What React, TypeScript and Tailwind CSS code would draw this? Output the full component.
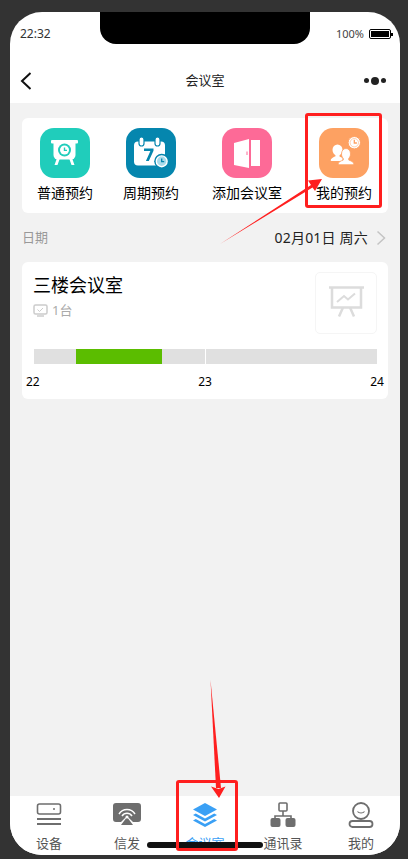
import React from 'react';

const FONT = "font-['Noto_Sans','Noto_Sans_CJK_SC',sans-serif]";

function BoardIcon() {
  return (
    <svg width="50" height="50" viewBox="0 0 50 50">
      <rect x="11" y="12" width="27" height="3.500" rx="1" fill="#fff" />
      <path d="M13.500 14h22v13a4.500 4.500 0 0 1-4.500 4.500H18a4.500 4.500 0 0 1-4.500-4.500z" fill="#fff" />
      <path d="M17 30l-2.500 7h3l2.500-7zM32 30l2.500 7h-3l-2.500-7z" fill="#fff" />
      <circle cx="24.500" cy="22" r="6.500" fill="#20cdbb" />
      <circle cx="24.500" cy="22" r="4.500" fill="#fff" />
      <path d="M24.500 19.500V22.400H27" stroke="#20cdbb" strokeWidth="1.400" fill="none" />
    </svg>
  );
}

function CalendarIcon() {
  return (
    <svg width="50" height="50" viewBox="0 0 50 50">
      <rect x="8" y="13.500" width="31" height="24" rx="4" fill="#fff" />
      <rect x="13" y="9" width="5" height="9" rx="2.500" fill="#fff" stroke="#0586ae" strokeWidth="1.200" />
      <rect x="29" y="9" width="5" height="9" rx="2.500" fill="#fff" stroke="#0586ae" strokeWidth="1.200" />
      <path d="M18 20.500h9.500v2.200L22.800 33h-2.900l4.500-10H18z" fill="#0586ae" />
      <circle cx="35.700" cy="33.300" r="7.500" fill="#0586ae" />
      <circle cx="35.700" cy="33.300" r="5.400" fill="#a9dbea" stroke="#fff" strokeWidth="1.400" />
      <path d="M35.700 30.500v3.100h2.500" stroke="#0586ae" strokeWidth="1.300" fill="none" />
    </svg>
  );
}

function DoorIcon() {
  return (
    <svg width="50" height="50" viewBox="0 0 50 50">
      <path d="M12 15l15-4v29l-15-3z" fill="#fff" />
      <path d="M29 12h9v26h-9z" fill="#fff" />
      <rect x="24.500" y="23.500" width="1" height="3.500" fill="#fd6a97" />
    </svg>
  );
}

function PeopleIcon() {
  return (
    <svg width="50" height="50" viewBox="0 0 50 50">
      <ellipse cx="18.500" cy="22" rx="5" ry="5.500" fill="#fff" />
      <path d="M16.500 25h4v3.500c1.500.8 2 1 3 1.500v3H12.500c-.6 0-.9-.3-.8-.9.2-1.700 2.500-3 4.800-3.900z" fill="#fff" />
      <path d="M20 36.700c-.6 0-.9-.4-.8-.9.3-1.900 2.700-2.900 5-3.700.2-.6.200-1.200 0-1.800-1-1.100-1.700-2.600-1.700-4.300 0-3.200 1.900-5.500 4.500-5.500s4.500 2.300 4.500 5.500c0 1.700-.7 3.200-1.700 4.300-.2.600-.2 1.200 0 1.800 2.300.8 4.700 1.800 5 3.700.1.500-.2.900-.8.900z" fill="#fff" stroke="#fda162" strokeWidth="0.800" />
      <circle cx="35.300" cy="14.700" r="6.200" fill="#fff" stroke="#fda162" strokeWidth="1" />
      <circle cx="35.300" cy="14.700" r="4.200" fill="none" stroke="#fda162" strokeWidth="0.500" />
      <path d="M35.300 11.700v3.300h2.600" stroke="#fda162" strokeWidth="1.300" fill="none" />
    </svg>
  );
}

function ActionItem({ label, bg, className, children }: { label: string; bg: string; className: string; children: React.ReactNode }) {
  return (
    <div className={`flex flex-col items-center ${className}`}>
      <div className={`flex h-[50px] w-[50px] items-center justify-center rounded-[14px] ${bg}`}>{children}</div>
      <span className="mt-[5px] whitespace-nowrap text-[14px] leading-[20px] text-black">{label}</span>
    </div>
  );
}

function TabItem({ label, active, children }: { label: string; active?: boolean; children: React.ReactNode }) {
  return (
    <div className="flex flex-1 flex-col items-center">
      <div className="flex h-[28px] w-[40px] items-center justify-center">{children}</div>
      <span className={`mt-[5px] text-[13px] leading-[18px] ${active ? 'text-[#3aa0f5]' : 'text-[#555]'}`}>{label}</span>
    </div>
  );
}

export default function App() {
  return (
    <div className={`relative h-[859px] w-[408px] overflow-hidden bg-[#333333] pl-[10px] pr-[8px] pt-[12px] ${FONT}`}>
      <div className="relative flex h-[843px] flex-col overflow-hidden rounded-[32px] bg-white">
        {/* notch */}
        <div className="absolute left-[90px] top-0 h-[32px] w-[210px] rounded-b-[16px] bg-black" />

        <div className="flex h-[46px] items-end justify-between pb-[17px] pl-[10px] pr-[7px]">
          <span className="text-[12px] leading-[14px] text-[#333]">22:32</span>
          <div className="flex items-center gap-[5px]">
            <span className="text-[11px] leading-[14px] text-[#444]">100%</span>
            <div className="flex items-center">
              <div className="h-[10px] w-[22px] rounded-[2px] border border-black p-[1px]">
                <div className="h-full w-full bg-black" />
              </div>
              <div className="h-[3px] w-[2px] bg-black" />
            </div>
          </div>
        </div>

        <div className="relative flex h-[45px] items-center justify-between pl-[10px] pr-[14px]">
          <svg width="12" height="20" viewBox="0 0 12 20">
            <path d="M10.500 2L2 10l8.500 8" stroke="#111" strokeWidth="2" fill="none" />
          </svg>
          <span className="absolute left-0 right-0 text-center text-[13px] text-[#222]">会议室</span>
          <div className="flex items-center gap-[2px]">
            <span className="h-[5px] w-[5px] rounded-full bg-[#222]" />
            <span className="h-[8px] w-[8px] rounded-full bg-[#222]" />
            <span className="h-[5px] w-[5px] rounded-full bg-[#222]" />
          </div>
        </div>

        <div className="flex-1 bg-[#f2f2f2] px-[12px] pt-[15px]">
          <div className="flex h-[95px] rounded-[6px] bg-white pl-[15px] pt-[10px]">
            <ActionItem label="普通预约" bg="bg-[#20cdbb]" className="">
              <BoardIcon />
            </ActionItem>
            <ActionItem label="周期预约" bg="bg-[#0586ae]" className="ml-[30px]">
              <CalendarIcon />
            </ActionItem>
            <ActionItem label="添加会议室" bg="bg-[#fd6a97]" className="ml-[33px]">
              <DoorIcon />
            </ActionItem>
            <ActionItem label="我的预约" bg="bg-[#fda162]" className="ml-[34px]">
              <PeopleIcon />
            </ActionItem>
          </div>

          <div className="flex h-[49px] items-center justify-between pr-[2px]">
            <span className="text-[13px] text-[#999]">日期</span>
            <div className="flex items-center gap-[8px]">
              <span className="text-[14px] tracking-[0.2px] text-[#222]">02月01日 周六</span>
              <svg width="10" height="16" viewBox="0 0 10 16">
                <path d="M1.500 1.500L8.500 8l-7 6.500" stroke="#c4c4c4" strokeWidth="1.500" fill="none" />
              </svg>
            </div>
          </div>

          <div className="h-[137px] rounded-[6px] bg-white pl-[12px] pr-[11px] pt-[10px]">
            <div className="flex h-[77px] justify-between">
              <div className="-ml-[1px]">
                <div className="text-[18px] leading-[26px] text-black">三楼会议室</div>
                <div className="mt-[3px] flex items-center gap-[4px] text-[13px] leading-[18px] text-[#aaa]">
                  <svg width="15" height="15" viewBox="0 0 15 15">
                    <rect x="1" y="2" width="13" height="9" rx="1.500" fill="none" stroke="#ccc" strokeWidth="1.500" />
                    <path d="M4.500 6.500l2 2 3.500-3.500" stroke="#ccc" strokeWidth="1" fill="none" />
                    <path d="M4 13h7" stroke="#ccc" strokeWidth="1.500" />
                  </svg>
                  <span>1台</span>
                </div>
              </div>
              <div className="flex h-[62px] w-[62px] items-center justify-center rounded-[5px] border border-[#f5f5f5]">
                <svg width="40" height="40" viewBox="0 0 40 40" fill="none" stroke="#dcdcdc" strokeWidth="2.500">
                  <path d="M3 4.500h35" />
                  <path d="M6 5v19.500h29V5" />
                  <path d="M11 19l7-6 4 3.500 7-6" strokeWidth="2" />
                  <path d="M17 24.500l-4 9M24 24.500l4 9" />
                </svg>
              </div>
            </div>
            <div className="flex h-[15px] bg-[#e0e0e0]">
              <div className="ml-[42px] h-full w-[86px] bg-[#5bbd00]" />
              <div className="ml-[43px] h-full w-px bg-white" />
            </div>
            <div className="-mx-[4px] mt-[10px] flex justify-between text-[12px] leading-[16px] text-black">
              <span className="-ml-[4px]">22</span>
              <span>23</span>
              <span className="-mr-[3px]">24</span>
            </div>
          </div>
        </div>

        <div className="flex h-[59px] bg-white pt-[5px]">
          <TabItem label="设备">
            <svg width="26" height="24" viewBox="0 0 26 24" fill="none" stroke="#6e6e6e">
              <rect x="1.500" y="1" width="23" height="10" rx="2" strokeWidth="1.600" />
              <circle cx="18" cy="6" r="1" fill="#6e6e6e" stroke="none" />
              <path d="M1 16h24M1 21h24" strokeWidth="2" />
            </svg>
          </TabItem>
          <TabItem label="信发">
            <svg width="30" height="26" viewBox="0 0 30 26">
              <path d="M4 1h22a3 3 0 0 1 3 3v13a3 3 0 0 1-3 3h-5l-6-6-6 6H4a3 3 0 0 1-3-3V4a3 3 0 0 1 3-3z" fill="#6e6e6e" />
              <path d="M7 12a9.500 9.500 0 0 1 16 0M10 14a6 6 0 0 1 10 0" stroke="#fff" strokeWidth="1.500" fill="none" />
              <path d="M15 15l6 8H9z" fill="#6e6e6e" />
              <circle cx="15" cy="15" r="1.500" fill="#fff" />
            </svg>
          </TabItem>
          <TabItem label="会议室" active>
            <svg width="26" height="26" viewBox="0 0 26 26">
              <path d="M13 1l12 6.500-12 6.500L1 7.500z" fill="#3aa0f5" />
              <path d="M3.800 11.500L13 16.500l9.200-5 2.800 1.500-12 6.500L1 13z" fill="#3aa0f5" />
              <path d="M3.800 17L13 22l9.200-5 2.800 1.500-12 6.500-12-6.500z" fill="#3aa0f5" />
            </svg>
          </TabItem>
          <TabItem label="通讯录">
            <svg width="26" height="26" viewBox="0 0 26 26" fill="none">
              <rect x="9" y="1" width="8" height="8" rx="1" stroke="#6e6e6e" strokeWidth="1.600" />
              <path d="M13 9v5M5 18v-4h16v4" stroke="#6e6e6e" strokeWidth="1.600" />
              <rect x="0.500" y="16" width="10" height="9" rx="2" fill="#6e6e6e" />
              <rect x="15.500" y="16" width="10" height="9" rx="2" fill="#6e6e6e" />
            </svg>
          </TabItem>
          <TabItem label="我的">
            <svg width="26" height="26" viewBox="0 0 26 26" fill="none" stroke="#6e6e6e">
              <circle cx="13" cy="9" r="8" strokeWidth="1.800" />
              <path d="M9.500 9.500c1.500 2 5.500 2 7 0" strokeWidth="1.200" />
              <rect x="1.500" y="19" width="23" height="6" rx="3" strokeWidth="1.800" />
            </svg>
          </TabItem>
        </div>
      </div>

      {/* home indicator */}
      <div className="absolute left-[147px] top-[842px] h-[6px] w-[116px] rounded-full bg-[#111]" />

      {/* annotations */}
      <div className="absolute left-[305px] top-[113px] h-[95px] w-[77px] rounded-[3px] border-[3px] border-[#ff1f1f]" />
      <div className="absolute left-[176px] top-[780px] h-[71px] w-[62px] rounded-[3px] border-[3px] border-[#ff1f1f]" />
      <svg className="absolute left-0 top-0" width="408" height="859" viewBox="0 0 408 859">
        <path d="M220 244L311 185L308 180.500L322 179L315 191L312.500 187.500Z" fill="#ff1f1f" />
        <path d="M210.500 680L216 788L221 788Z" fill="#ff1f1f" />
        <path d="M211 786.500L218.500 789L225.500 786.500L219 798Z" fill="#ff1f1f" />
      </svg>
    </div>
  );
}
